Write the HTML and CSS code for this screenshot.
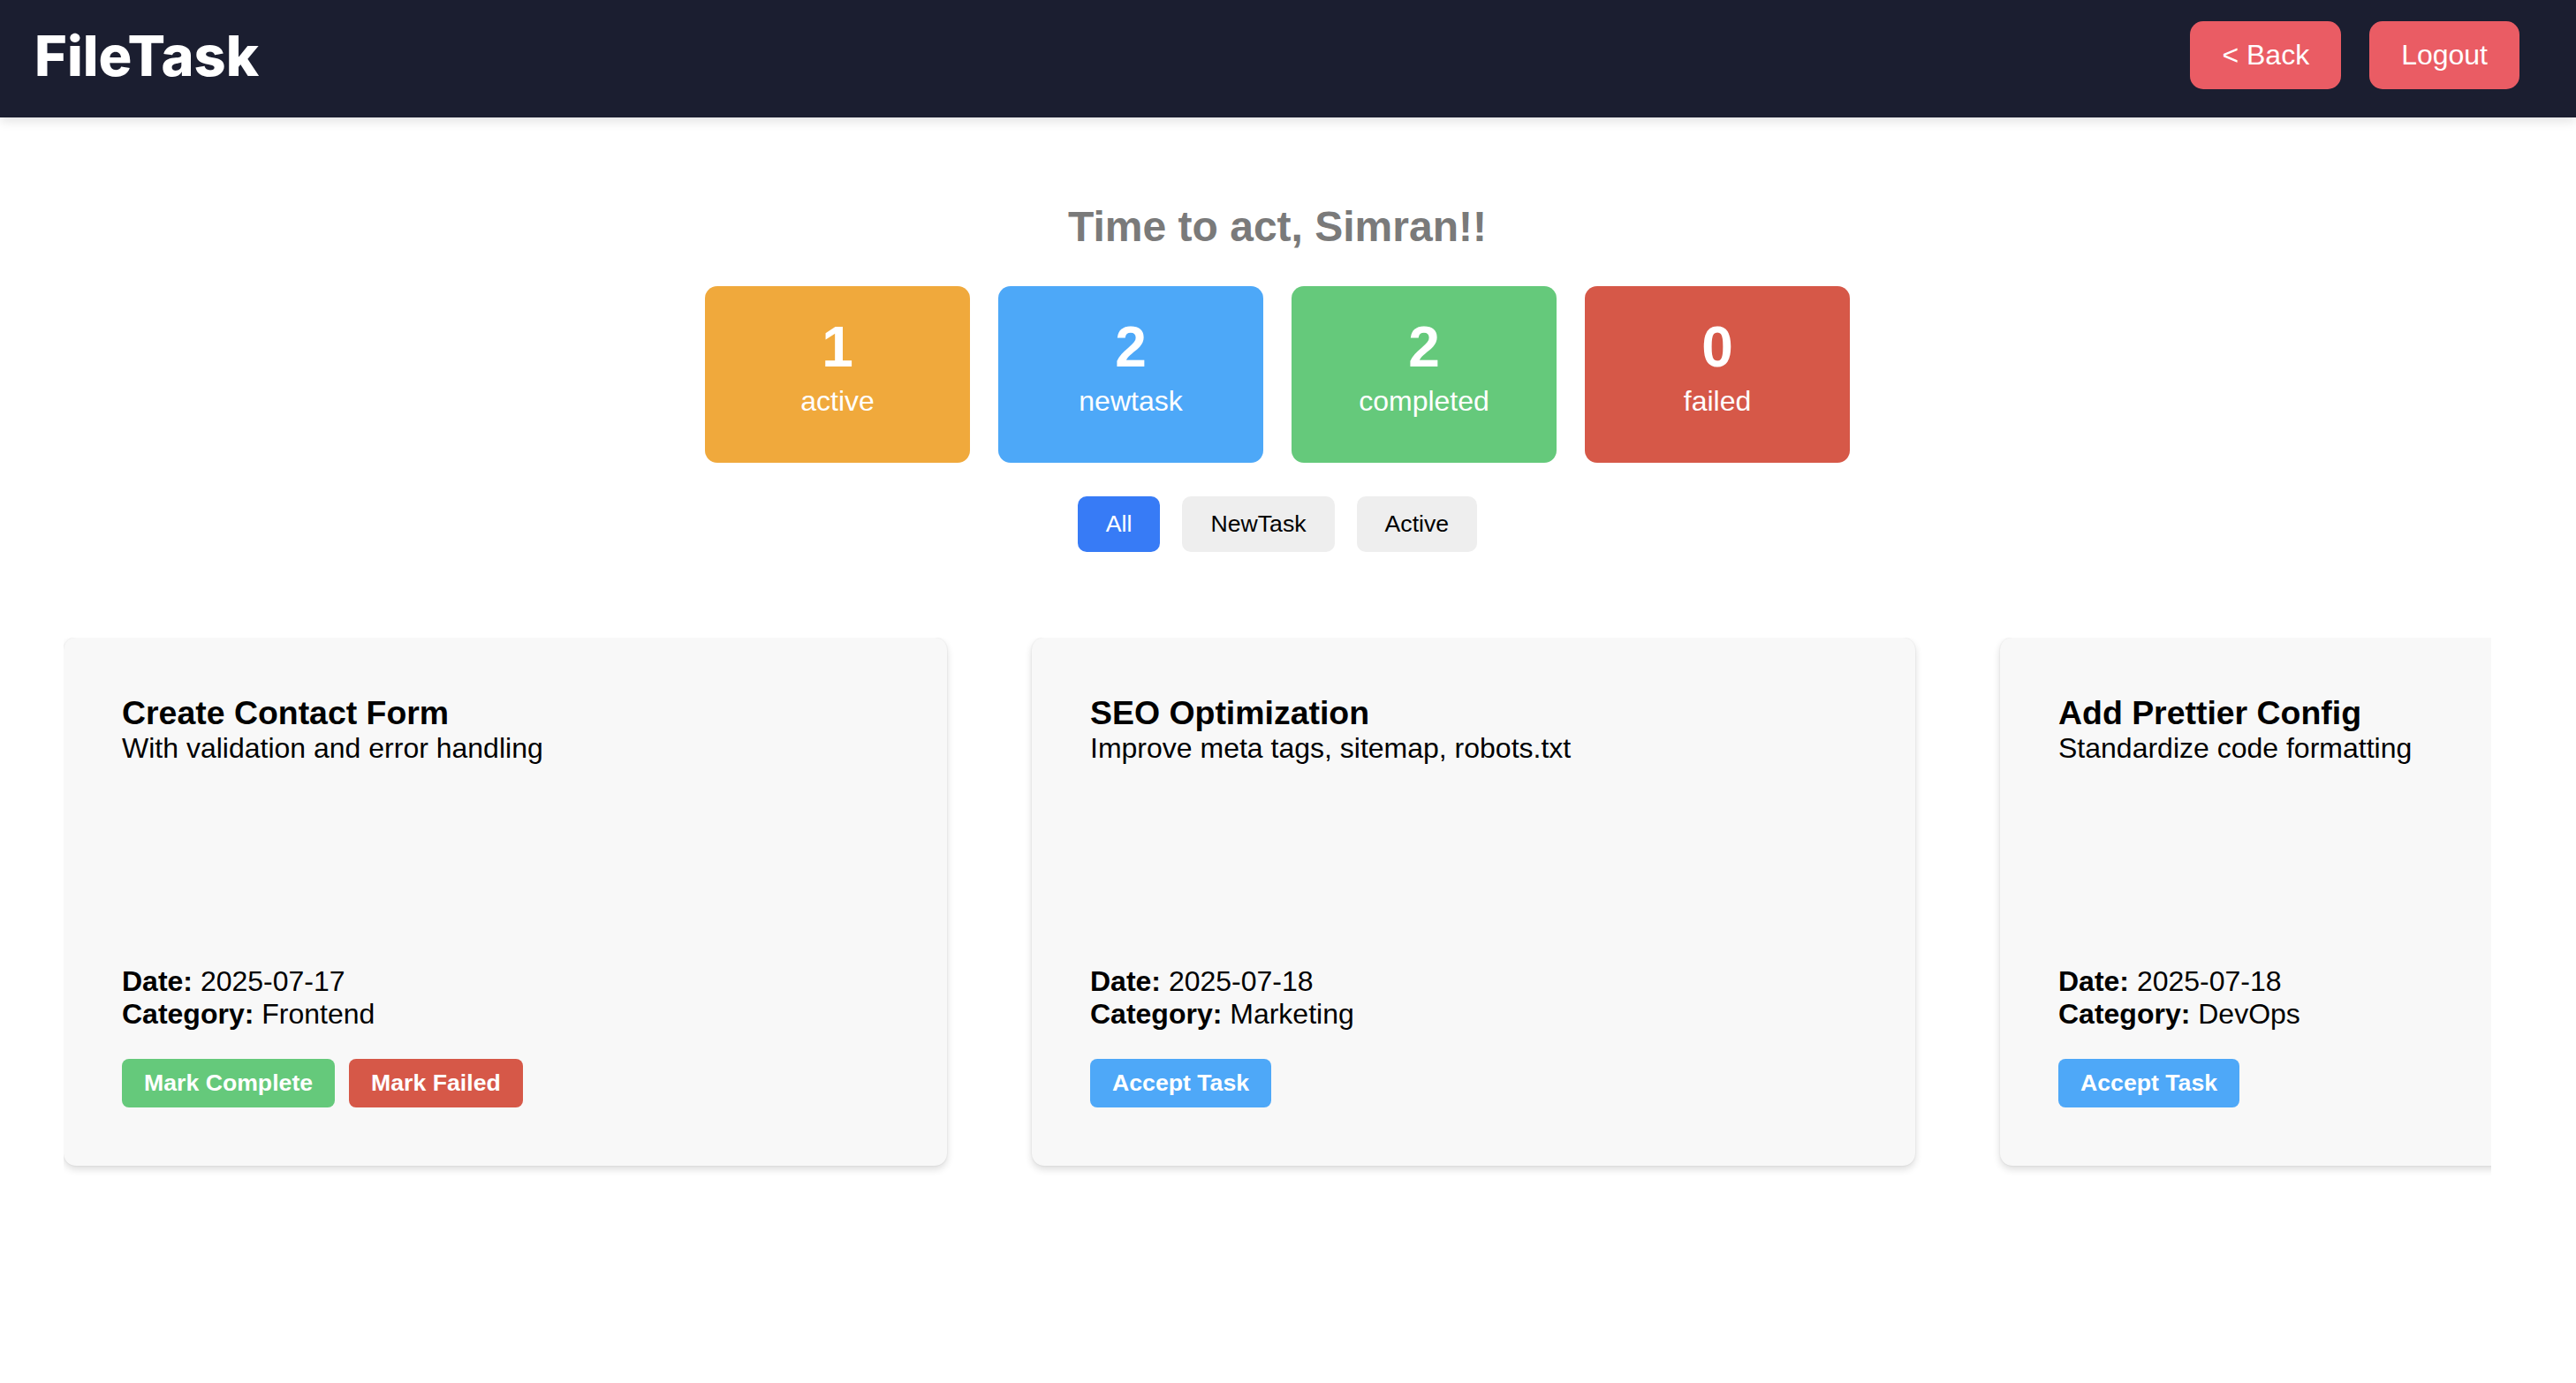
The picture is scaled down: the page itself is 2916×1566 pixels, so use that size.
FILE: index.html
```html
<!DOCTYPE html>
<html lang="en">
<head>
<meta charset="utf-8">
<title>FileTask</title>
<link rel="stylesheet" href="styles.css">
</head>
<body>
<header class="topbar">
  <h1 class="logo">FileTask</h1>
  <nav class="top-actions">
    <button class="top-btn">&lt; Back</button>
    <button class="top-btn">Logout</button>
  </nav>
</header>
<main class="main">
  <h2 class="greeting">Time to act, Simran!!</h2>
  <section class="stats">
    <div class="stat stat-active"><div class="stat-num">1</div><div class="stat-label">active</div></div>
    <div class="stat stat-new"><div class="stat-num">2</div><div class="stat-label">newtask</div></div>
    <div class="stat stat-done"><div class="stat-num">2</div><div class="stat-label">completed</div></div>
    <div class="stat stat-failed"><div class="stat-num">0</div><div class="stat-label">failed</div></div>
  </section>
  <div class="filters">
    <button class="filter filter-on">All</button>
    <button class="filter">NewTask</button>
    <button class="filter">Active</button>
  </div>
  <section class="tasks">
    <article class="task">
      <h3 class="task-title">Create Contact Form</h3>
      <p class="task-desc">With validation and error handling</p>
      <div class="task-meta">
        <p class="meta-line"><strong>Date:</strong> 2025-07-17</p>
        <p class="meta-line"><strong>Category:</strong> Frontend</p>
        <div class="task-actions">
          <button class="act act-green">Mark Complete</button>
          <button class="act act-red">Mark Failed</button>
        </div>
      </div>
    </article>
    <article class="task">
      <h3 class="task-title">SEO Optimization</h3>
      <p class="task-desc">Improve meta tags, sitemap, robots.txt</p>
      <div class="task-meta">
        <p class="meta-line"><strong>Date:</strong> 2025-07-18</p>
        <p class="meta-line"><strong>Category:</strong> Marketing</p>
        <div class="task-actions">
          <button class="act act-blue">Accept Task</button>
        </div>
      </div>
    </article>
    <article class="task">
      <h3 class="task-title">Add Prettier Config</h3>
      <p class="task-desc">Standardize code formatting</p>
      <div class="task-meta">
        <p class="meta-line"><strong>Date:</strong> 2025-07-18</p>
        <p class="meta-line"><strong>Category:</strong> DevOps</p>
        <div class="task-actions">
          <button class="act act-blue">Accept Task</button>
        </div>
      </div>
    </article>
  </section>
</main>
</body>
</html>
```
FILE: styles.css
```css
* { box-sizing: border-box; }

body {
  margin: 0;
  background: #ffffff;
  font-family: "Liberation Sans", Arial, Helvetica, sans-serif;
  font-size: 32px;
  color: #000;
}

button {
  font-family: "Liberation Sans", Arial, Helvetica, sans-serif;
  border: none;
  cursor: pointer;
}

.topbar {
  height: 133px;
  background: #1b1e30;
  display: flex;
  align-items: center;
  justify-content: space-between;
  padding: 0 64px 8px 39px;
  box-shadow: 0 4px 12px rgba(0, 0, 0, 0.12);
  position: relative;
}

.logo {
  margin: 0;
  font-family: Inter, "DejaVu Sans", sans-serif;
  font-weight: 800;
  font-size: 63px;
  color: #ffffff;
  letter-spacing: 0;
}

.top-actions {
  display: flex;
  gap: 32px;
}

.top-btn {
  background: #ea5c64;
  color: #ffffff;
  font-size: 32px;
  height: 77px;
  padding: 0 36px;
  border-radius: 15px;
}

.main {
  padding: 96px 96px 0 72px;
}

.greeting {
  margin: 0 0 40px;
  text-align: center;
  font-size: 48px;
  font-weight: 700;
  color: #7a7a7a;
}

.stats {
  display: flex;
  justify-content: center;
  gap: 32px;
}

.stat {
  width: 300px;
  height: 200px;
  border-radius: 14px;
  color: #ffffff;
  text-align: center;
  padding-top: 32px;
}

.stat-num {
  font-size: 64px;
  font-weight: 700;
  line-height: 74px;
}

.stat-label {
  font-size: 32px;
  line-height: 37px;
  margin-top: 6px;
}

.stat-active { background: #f0a93c; }
.stat-new { background: #4da8f8; }
.stat-done { background: #65c97b; }
.stat-failed { background: #d65848; }

.filters {
  display: flex;
  justify-content: center;
  gap: 25px;
  margin-top: 38px;
}

.filter {
  height: 63px;
  padding: 0 32px;
  font-size: 26.67px;
  background: #eeeeee;
  color: #000;
  border-radius: 10px;
}

.filter-on {
  background: #377bf6;
  color: #ffffff;
}

.tasks {
  display: flex;
  gap: 96px;
  margin-top: 97px;
  overflow: hidden;
  padding-bottom: 24px;
}

.task {
  flex: 0 0 1000px;
  height: 598px;
  background: #f8f8f8;
  border-radius: 14px;
  padding: 64px 66px 66px;
  display: flex;
  flex-direction: column;
  box-shadow: 0 4px 8px rgba(0, 0, 0, 0.14), 0 0 2px rgba(0, 0, 0, 0.1);
}

.task-title {
  margin: 0;
  font-size: 37.44px;
  font-weight: 700;
}

.task-desc {
  margin: 0;
  font-size: 32px;
}

.task-meta {
  margin-top: auto;
}

.meta-line {
  margin: 0;
  font-size: 32px;
}

.task-actions {
  display: flex;
  gap: 16px;
  margin-top: 32px;
}

.act {
  height: 55px;
  padding: 0 25px;
  font-size: 26.67px;
  font-weight: 700;
  color: #ffffff;
  border-radius: 8px;
}

.act-green { background: #65c97b; }
.act-red { background: #d65848; }
.act-blue { background: #4ea8f8; }
```
